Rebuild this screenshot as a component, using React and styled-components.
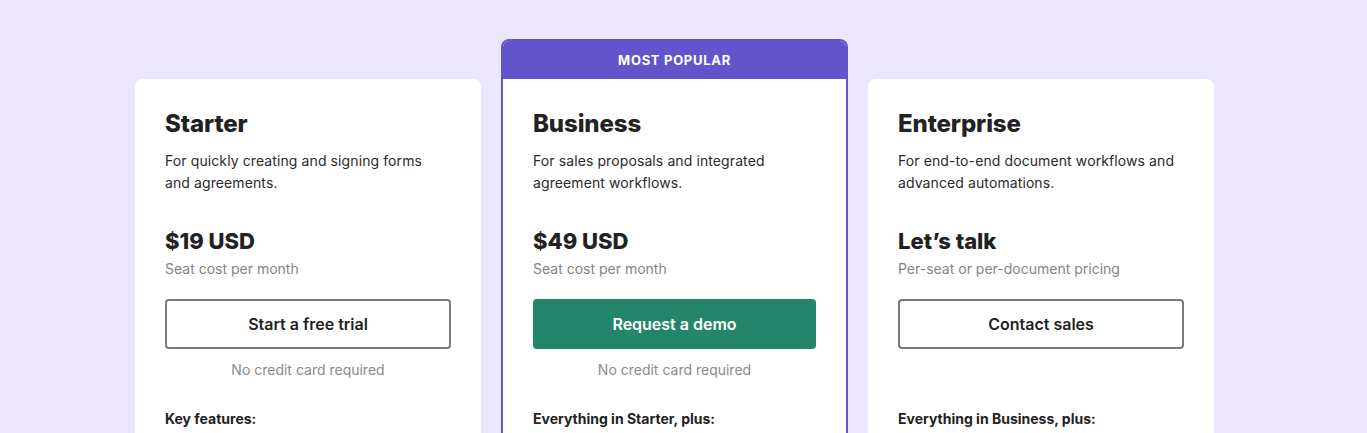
import React from "react";
import styled, { createGlobalStyle } from "styled-components";

const Global = createGlobalStyle`
  html, body { margin: 0; padding: 0; }
  body {
    background: #ede7fe;
    font-family: Inter, "Noto Sans", sans-serif;
    color: #222;
    -webkit-font-smoothing: antialiased;
  }
`;

const Page = styled.div`
  display: flex;
  align-items: flex-start;
  gap: 20px;
  padding: 39px 0 0 135px;
  height: 433px;
  box-sizing: border-box;
  overflow: hidden;
`;

const Card = styled.div`
  width: ${(p) => (p.$featured ? "347px" : "346px")};
  margin-top: ${(p) => (p.$featured ? "0" : "40px")};
  background: #fff;
  border-radius: 8px;
  border: ${(p) => (p.$featured ? "2px solid #6454cc" : "none")};
  box-sizing: border-box;
  overflow: hidden;
  flex-shrink: 0;
`;

const Banner = styled.div`
  height: 38px;
  background: #6454cc;
  color: #fff;
  font-size: 13px;
  font-weight: 700;
  letter-spacing: 0.7px;
  display: flex;
  align-items: center;
  justify-content: center;
`;

const Body = styled.div`
  padding: 29px 30px 80px;
  display: flex;
  flex-direction: column;
`;

const Title = styled.h2`
  margin: 0;
  font-size: 24px;
  line-height: 32px;
  font-weight: 800;
  letter-spacing: -0.1px;
  color: #222;
`;

const Desc = styled.p`
  margin: 10px 0 0;
  font-size: 14px;
  line-height: 22px;
  color: #2b2b2b;
  letter-spacing: 0.1px;
  min-height: 44px;
`;

const Price = styled.div`
  margin-top: 33px;
  font-size: 22px;
  line-height: 28px;
  font-weight: 800;
  color: #222;
`;

const PriceNote = styled.div`
  margin-top: 4px;
  font-size: 14px;
  line-height: 20px;
  color: #858585;
`;

const Button = styled.button`
  margin-top: 20px;
  height: 50px;
  width: 100%;
  box-sizing: border-box;
  border-radius: 4px;
  font-family: inherit;
  font-size: 16px;
  font-weight: 600;
  cursor: pointer;
  border: ${(p) => (p.$primary ? "none" : "2px solid #7a7a7a")};
  background: ${(p) => (p.$primary ? "#23866a" : "#fff")};
  color: ${(p) => (p.$primary ? "#fff" : "#222")};
`;

const Hint = styled.div`
  margin-top: 11px;
  font-size: 14px;
  line-height: 20px;
  height: 20px;
  text-align: center;
  color: #8a8a8a;
`;

const FeatHead = styled.div`
  margin-top: 29px;
  font-size: 14px;
  line-height: 20px;
  font-weight: 700;
  color: #222;
`;

const plans = [
  {
    name: "Starter",
    desc: "For quickly creating and signing forms and agreements.",
    price: "$19 USD",
    note: "Seat cost per month",
    cta: "Start a free trial",
    hint: "No credit card required",
    head: "Key features:",
  },
  {
    name: "Business",
    featured: true,
    desc: "For sales proposals and integrated agreement workflows.",
    price: "$49 USD",
    note: "Seat cost per month",
    cta: "Request a demo",
    hint: "No credit card required",
    head: "Everything in Starter, plus:",
  },
  {
    name: "Enterprise",
    desc: "For end-to-end document workflows and advanced automations.",
    price: "Let\u2019s talk",
    note: "Per-seat or per-document pricing",
    cta: "Contact sales",
    hint: "",
    head: "Everything in Business, plus:",
  },
];

export default function App() {
  return (
    <>
      <Global />
      <Page>
        {plans.map((p) => (
          <Card key={p.name} $featured={p.featured}>
            {p.featured && <Banner>MOST POPULAR</Banner>}
            <Body>
              <Title>{p.name}</Title>
              <Desc>{p.desc}</Desc>
              <Price>{p.price}</Price>
              <PriceNote>{p.note}</PriceNote>
              <Button $primary={p.featured}>{p.cta}</Button>
              <Hint>{p.hint}</Hint>
              <FeatHead>{p.head}</FeatHead>
            </Body>
          </Card>
        ))}
      </Page>
    </>
  );
}
